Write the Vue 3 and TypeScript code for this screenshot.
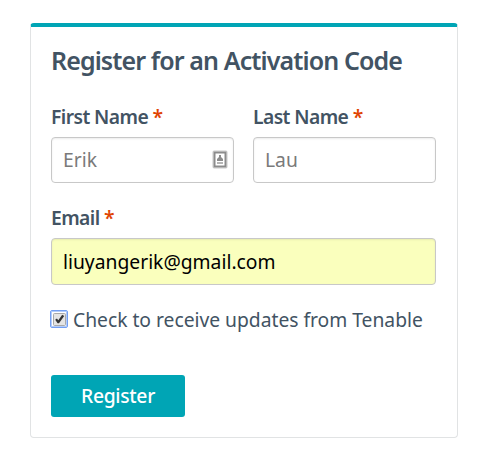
<script setup lang="ts">
import { ref } from "vue";

const firstName = ref("");
const lastName = ref("");
const email = ref("liuyangerik@gmail.com");
const updates = ref(true);
</script>

<template>
  <form class="card" @submit.prevent>
    <h2 class="title">Register for an Activation Code</h2>
    <div class="row">
      <div class="field">
        <label for="first">First Name <span class="required">*</span></label>
        <div class="control">
          <input id="first" v-model="firstName" type="text" placeholder="Erik" />
          <svg class="autofill" width="16" height="19" viewBox="0 0 16 19">
            <rect x="1" y="1" width="14" height="17" rx="1" fill="#fff" stroke="#c9c9c9" />
            <rect x="2.500" y="2.500" width="11" height="14" fill="#fff" stroke="#8c8c8c" stroke-width="2" />
            <path d="M7 5h2v2.500h1v1h1V11H5V8.500h1v-1h1z" fill="#8c8c8c" />
            <path d="M5 12h6v2H5z" fill="#b5b5b5" />
          </svg>
        </div>
      </div>
      <div class="field">
        <label for="last">Last Name <span class="required">*</span></label>
        <input id="last" v-model="lastName" type="text" placeholder="Lau" />
      </div>
    </div>
    <div class="field">
      <label for="email">Email <span class="required">*</span></label>
      <input id="email" v-model="email" class="filled" type="text" />
    </div>
    <label class="check">
      <input v-model="updates" type="checkbox" />
      <span class="box">
        <svg width="13" height="13" viewBox="0 0 13 13">
          <rect x="0.500" y="0.500" width="12" height="12" rx="1" fill="#e4e4e4" stroke="#a9a9a9" />
          <path v-if="updates" d="M2.200 6.800L3.900 5.500l1.400 1.800L9.200 1.800l2 1.200L6 10.300H4.600z" fill="#333" />
        </svg>
      </span>
      <span class="check-text">Check to receive updates from Tenable</span>
    </label>
    <button type="submit">Register</button>
  </form>
</template>

<style>
body {
  background: #fff;
}
</style>

<style scoped>
* {
  box-sizing: border-box;
}

.card {
  width: 428px;
  height: 415px;
  margin: 23px 0 0 30px;
  padding: 17px 21px 20px 20px;
  border: 1px solid #e1e3e4;
  border-top: 4px solid #00a5b5;
  border-radius: 4px;
  font-family: "Noto Sans", sans-serif;
  font-size: 19.3px;
  color: #425363;
}

.title {
  margin: 0 0 26px;
  font-size: 25px;
  font-weight: 600;
  line-height: 32px;
  letter-spacing: -0.89px;
  white-space: nowrap;
}

.row {
  display: grid;
  grid-template-columns: 183px 183px;
  gap: 19px;
  margin-bottom: 20px;
}

.field label {
  display: block;
  height: 35px;
  font-weight: 600;
  line-height: 30px;
  letter-spacing: -0.58px;
  white-space: nowrap;
}

.required {
  color: #e04403;
}

.control {
  position: relative;
}

.field input {
  display: block;
  width: 100%;
  height: 46px;
  padding: 0 11px 2px;
  border: 1px solid #c8c8c8;
  border-radius: 4px;
  outline: none;
  background: #fff;
  box-shadow: inset 0 1px 2px rgba(0, 0, 0, 0.08);
  color: #000;
  font: inherit;
}

.field input::placeholder {
  color: #7a7a7a;
  opacity: 1;
}

.field input.filled {
  height: 47px;
  padding-bottom: 0;
  background: #faffbd;
}

.autofill {
  position: absolute;
  top: 13px;
  right: 6px;
}

.check {
  display: flex;
  align-items: center;
  height: 28px;
  margin-top: 20px;
  white-space: nowrap;
}

.check input {
  position: absolute;
  opacity: 0;
}

.box {
  display: flex;
  align-items: center;
  justify-content: center;
  flex: none;
  width: 18px;
  height: 18px;
  margin: 0 5px 0 -1px;
  border: 1px solid #739ff2;
  border-radius: 2px;
  box-shadow: inset 0 0 0 1px #b3ccfa;
}

.check-text {
  letter-spacing: -0.02px;
}

button {
  display: block;
  width: 134px;
  height: 42px;
  margin-top: 42px;
  padding: 0 0 2px;
  border: 0;
  border-radius: 3px;
  background: #00a5b5;
  color: #fff;
  font: inherit;
  font-weight: 500;
  letter-spacing: -0.3px;
}
</style>
